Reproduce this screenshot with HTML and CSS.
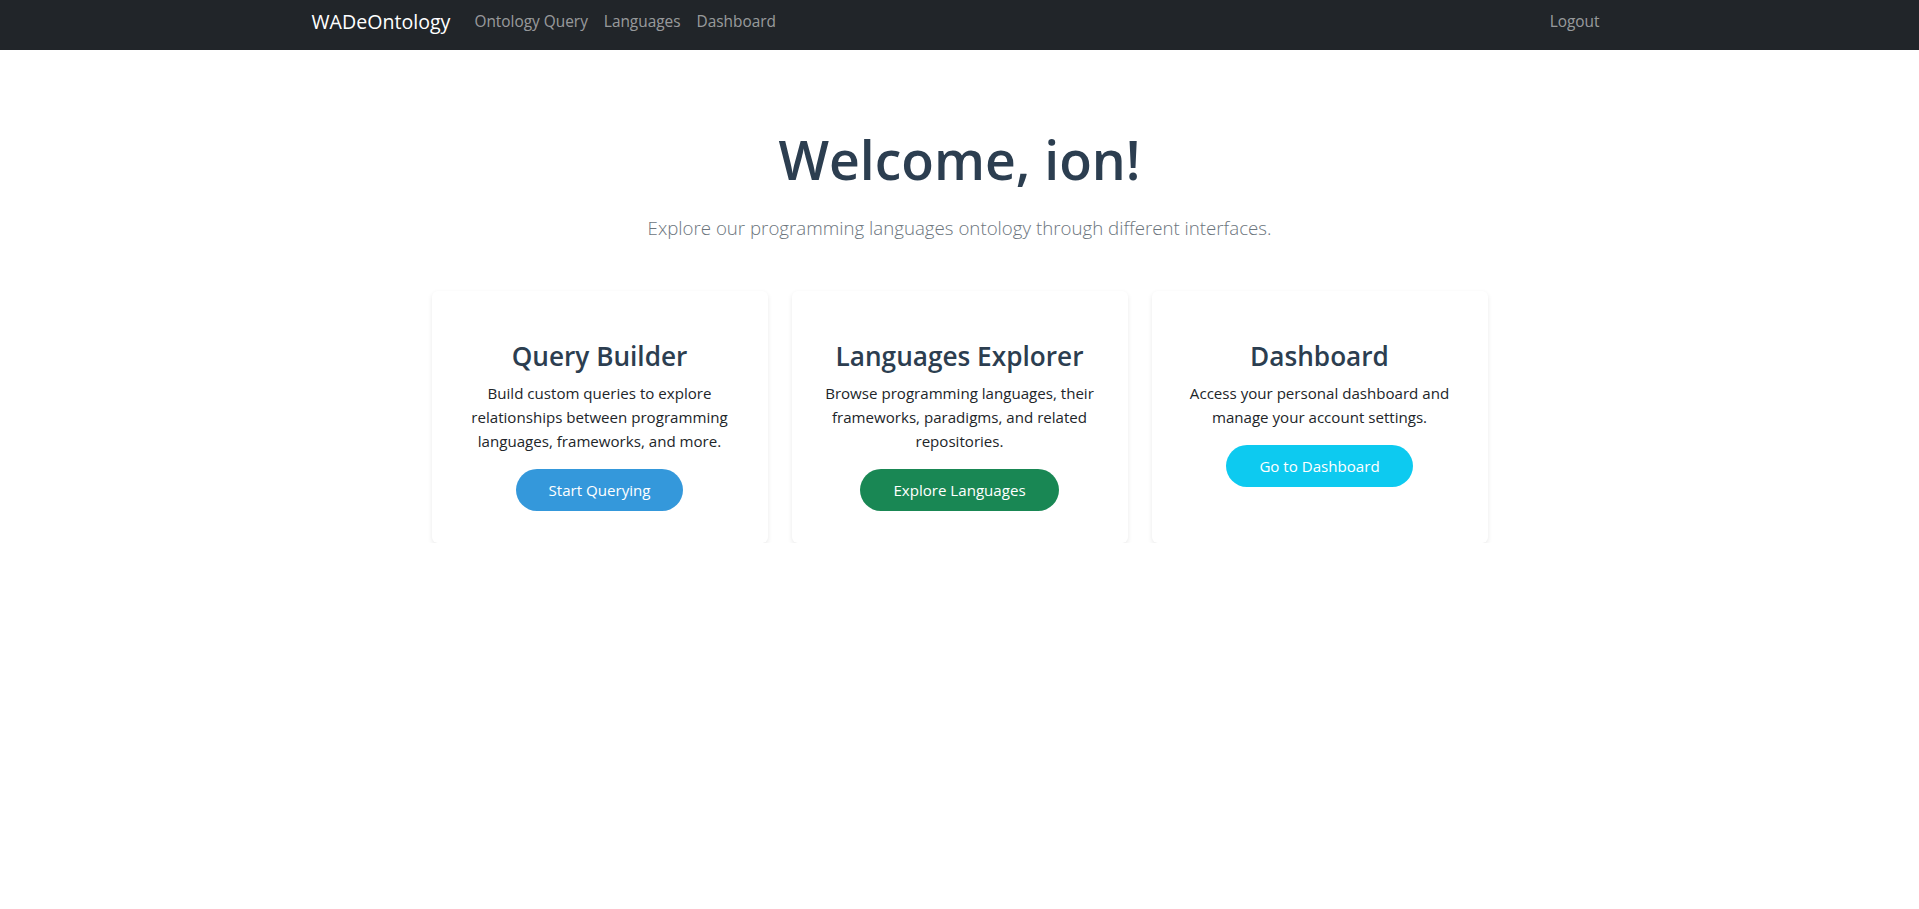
FILE: index.html
```html
<!DOCTYPE html>
<html lang="en">
<head>
<meta charset="utf-8">
<title>WADeOntology</title>
<link rel="stylesheet" href="styles.css">
</head>
<body>
<nav class="navbar">
  <div class="nav-container">
    <a class="brand" href="#">WADeOntology</a>
    <ul class="nav-links">
      <li><a href="#">Ontology Query</a></li>
      <li><a href="#">Languages</a></li>
      <li><a href="#">Dashboard</a></li>
    </ul>
    <ul class="nav-links nav-right">
      <li><a href="#">Logout</a></li>
    </ul>
  </div>
</nav>
<main class="main">
  <h1 class="welcome">Welcome, ion!</h1>
  <p class="lead">Explore our programming languages ontology through different interfaces.</p>
  <div class="cards">
    <div class="card">
      <h3 class="card-title">Query Builder</h3>
      <p class="card-text">Build custom queries to explore relationships between programming languages, frameworks, and more.</p>
      <a class="btn btn-blue" href="#">Start Querying</a>
    </div>
    <div class="card">
      <h3 class="card-title">Languages Explorer</h3>
      <p class="card-text">Browse programming languages, their frameworks, paradigms, and related repositories.</p>
      <a class="btn btn-green" href="#">Explore Languages</a>
    </div>
    <div class="card">
      <h3 class="card-title">Dashboard</h3>
      <p class="card-text">Access your personal dashboard and manage your account settings.</p>
      <a class="btn btn-cyan" href="#">Go to Dashboard</a>
    </div>
  </div>
</main>
</body>
</html>
```
FILE: styles.css
```css
* { box-sizing: border-box; }
html, body { margin: 0; padding: 0; }
body {
  font-family: "Open Sans", "Noto Sans", sans-serif;
  font-size: 15.1px;
  line-height: 24px;
  color: #212529;
  background: #fff;
}
a { text-decoration: none; }

.navbar {
  background: #212529;
  height: 50px;
  padding-bottom: 6px;
  display: flex;
  align-items: center;
}
.nav-container {
  width: 1320px;
  margin: 0 auto;
  padding: 0 12px;
  display: flex;
  align-items: center;
}
.brand {
  color: #fff;
  font-size: 19.6px;
  line-height: 30px;
  margin-right: 16px;
}
.nav-links {
  list-style: none;
  margin: 0;
  padding: 0;
  display: flex;
}
.nav-links a {
  display: block;
  padding: 8px;
  color: rgba(255,255,255,.55);
  font-size: 15.4px;
  line-height: 24px;
}
.nav-right { margin-left: auto; }

.main {
  display: flex;
  flex-direction: column;
  align-items: center;
  text-align: center;
  padding-top: 76px;
}
.welcome {
  margin: 0 0 20px;
  font-size: 53.5px;
  line-height: 67px;
  font-weight: 600;
  color: #2c3e50;
}
.lead {
  margin: 0 0 48px;
  font-size: 18.7px;
  line-height: 30px;
  font-weight: 300;
  color: #6c757d;
}
.cards {
  display: grid;
  grid-template-columns: repeat(3, 336px);
  gap: 24px;
}
.card {
  background: #fff;
  border-radius: 6px;
  box-shadow: 0 2px 5px rgba(0,0,0,.09);
  padding: 48px 24px 32px;
  display: flex;
  flex-direction: column;
  align-items: center;
}
.card-title {
  margin: 0 0 8px;
  font-size: 26.2px;
  line-height: 34px;
  font-weight: 600;
  color: #2c3e50;
}
.card-text {
  margin: 0 0 16px;
}
.btn {
  display: inline-block;
  padding: 8px 32px;
  border: 1px solid transparent;
  border-radius: 21px;
  color: #fff;
  font-size: 15.1px;
  line-height: 24px;
}
.btn-blue { background: #3498db; }
.btn-green { background: #198754; }
.btn-cyan { background: #0dcaf0; }
```
